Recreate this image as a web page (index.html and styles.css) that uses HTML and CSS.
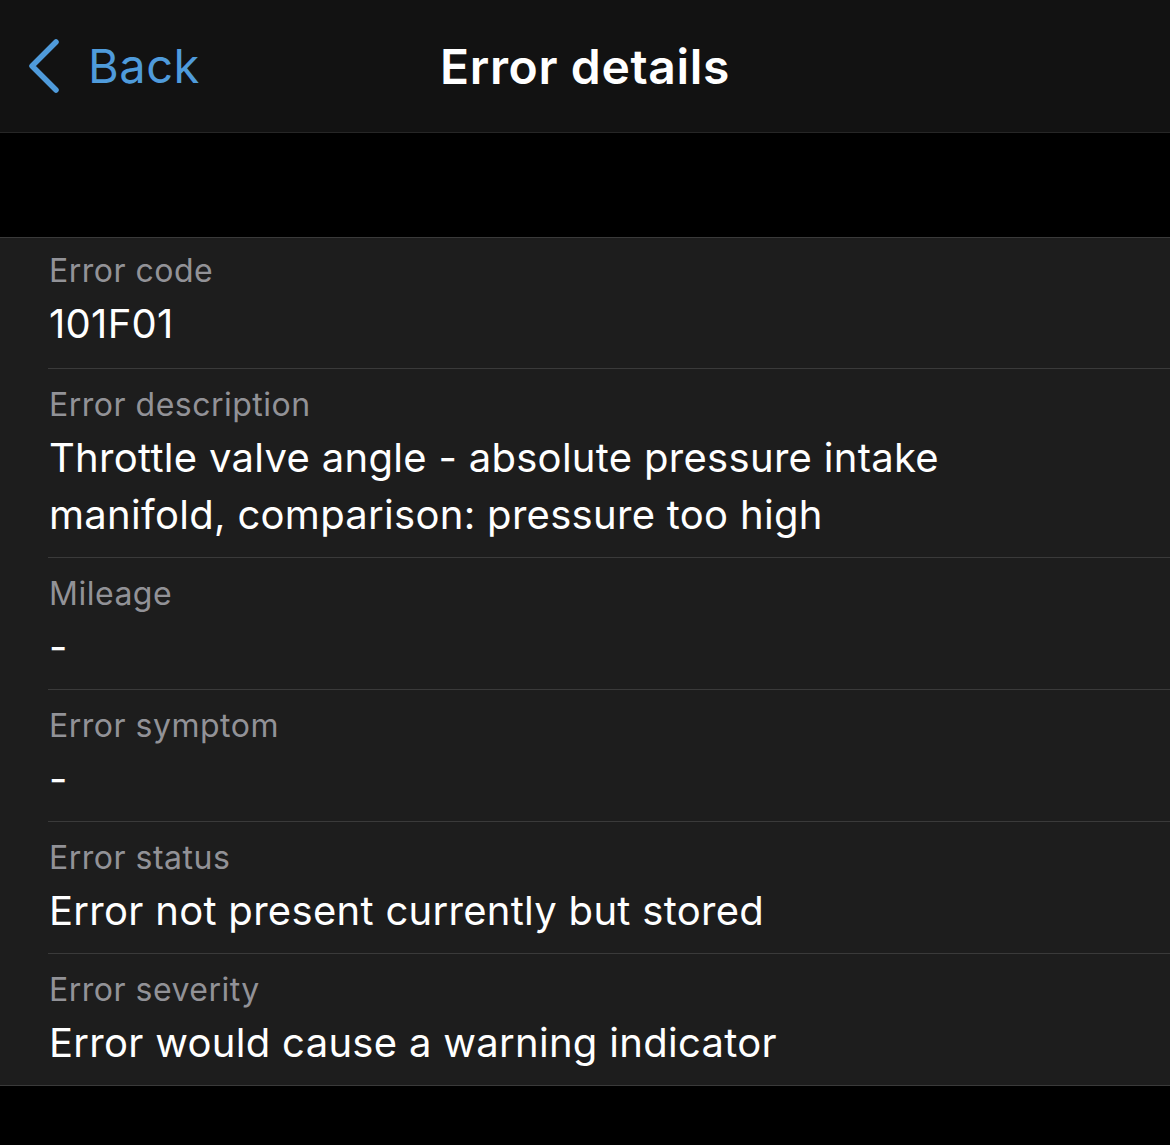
FILE: index.html
```html
<!DOCTYPE html>
<html lang="en">
<head>
<meta charset="utf-8">
<title>Error details</title>
<link rel="stylesheet" href="styles.css">
</head>
<body>
<header class="navbar">
  <a class="back" href="#">
    <svg class="chevron" width="36" height="58" viewBox="0 0 36 58" aria-hidden="true">
      <path d="M31 5 L7 29 L31 53" fill="none" stroke="currentColor" stroke-width="5.5" stroke-linecap="round" stroke-linejoin="round"/>
    </svg>
    <span class="back-label">Back</span>
  </a>
  <h1 class="title">Error details</h1>
</header>
<div class="spacer"></div>
<section class="list">
  <div class="row row-first">
    <div class="label">Error code</div>
    <div class="value">101F01</div>
  </div>
  <div class="row">
    <div class="label">Error description</div>
    <div class="value">Throttle valve angle - absolute pressure intake manifold, comparison: pressure too high</div>
  </div>
  <div class="row">
    <div class="label">Mileage</div>
    <div class="value">-</div>
  </div>
  <div class="row">
    <div class="label">Error symptom</div>
    <div class="value">-</div>
  </div>
  <div class="row">
    <div class="label">Error status</div>
    <div class="value">Error not present currently but stored</div>
  </div>
  <div class="row">
    <div class="label">Error severity</div>
    <div class="value">Error would cause a warning indicator</div>
  </div>
</section>
</body>
</html>
```
FILE: styles.css
```css
html, body {
  margin: 0;
  padding: 0;
  background: #000;
}
body {
  font-family: Inter, "Noto Sans", "Liberation Sans", sans-serif;
  color: #fff;
  -webkit-font-smoothing: antialiased;
}
.navbar {
  position: relative;
  height: 132px;
  background: #121212;
  border-bottom: 1px solid #262626;
  display: flex;
  align-items: center;
  justify-content: center;
}
.back {
  position: absolute;
  left: 25px;
  top: 37px;
  display: flex;
  align-items: center;
  gap: 27px;
  color: #4f9bdb;
  text-decoration: none;
}
.chevron {
  display: block;
}
.back-label {
  font-size: 47px;
  line-height: 58px;
  letter-spacing: 0.5px;
}
.title {
  margin: 0;
  font-size: 48px;
  font-weight: 600;
  letter-spacing: 0.65px;
  color: #fff;
}
.spacer {
  height: 104px;
  background: #000;
}
.list {
  background: #1d1d1d;
  border-top: 1px solid #3a3a3a;
  border-bottom: 1px solid #3a3a3a;
  padding-left: 48px;
}
.row {
  padding: 16px 0 14px 1px;
  border-bottom: 1px solid #3a3a3a;
}
.row:last-child {
  border-bottom: none;
}
.row-first {
  padding-top: 13px;
  padding-bottom: 16px;
}
.label {
  font-size: 32px;
  line-height: 40px;
  color: #929297;
  letter-spacing: 0.5px;
  margin-bottom: 4px;
}
.value {
  font-size: 40px;
  line-height: 57px;
  color: #fff;
  letter-spacing: 0.3px;
  padding-right: 140px;
}
```
